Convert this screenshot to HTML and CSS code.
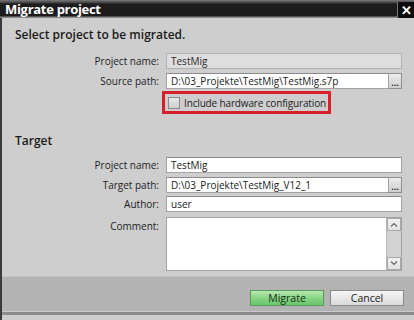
FILE: index.html
```html
<!DOCTYPE html>
<html lang="en">
<head>
  <meta charset="UTF-8">
  <meta name="viewport" content="width=device-width,initial-scale=1">
  <title>Migrate project</title>
  <link rel="stylesheet" href="styles.css">
</head>
<body>
  <div class="dialog">
    <div class="titlebar">
      <span class="title">Migrate project</span>
      <span class="close">&#x2715;</span>
    </div>

    <div class="content">
      <h3>Select project to be migrated.</h3>

      <div class="row">
        <label for="srcName">Project name:</label>
        <input type="text" id="srcName" value="TestMig" disabled>
      </div>
      <div class="row">
        <label for="srcPath">Source path:</label>
        <input type="text" id="srcPath" value="D:\03_Projekte\TestMig\TestMig.s7p">
        <button type="button" class="browse">...</button>
      </div>
      <div class="row check-row">
        <label class="hw-check"><span class="box"></span>Include hardware configuration</label>
      </div>

      <h3 class="target">Target</h3>

      <div class="row">
        <label for="tgtName">Project name:</label>
        <input type="text" id="tgtName" value="TestMig">
      </div>
      <div class="row">
        <label for="tgtPath">Target path:</label>
        <input type="text" id="tgtPath" value="D:\03_Projekte\TestMig_V12_1">
        <button type="button" class="browse">...</button>
      </div>
      <div class="row author">
        <label for="author">Author:</label>
        <input type="text" id="author" value="user">
      </div>
      <div class="row comment">
        <label for="comment">Comment:</label>
        <div class="memo">
          <textarea id="comment"></textarea>
          <div class="scroll">
            <span class="arrow">
              <svg width="8" height="5" viewBox="0 0 8 5"><path d="M1 4.5 L4 1.5 L7 4.5" fill="none" stroke="#666" stroke-width="1.2"/></svg>
            </span>
            <span class="arrow">
              <svg width="8" height="5" viewBox="0 0 8 5"><path d="M1 0.5 L4 3.5 L7 0.5" fill="none" stroke="#666" stroke-width="1.2"/></svg>
            </span>
          </div>
        </div>
      </div>
    </div>

    <div class="footer">
      <button type="button" class="btn migrate">Migrate</button>
      <button type="button" class="btn">Cancel</button>
    </div>
  </div>
</body>
</html>
```

FILE: styles.css
```css
body {
  margin: 0;
  font-family: 'Open Sans', sans-serif;
  color: #222;
  background: #1e1e1e;
}
.dialog {
  width: 414px;
  height: 320px;
  display: flex;
  flex-direction: column;
  background: #cecece;
  border-left: 2px solid #3a3a3a;
  box-sizing: border-box;
}

/* title bar */
.titlebar {
  height: 18px;
  display: flex;
  align-items: center;
  justify-content: space-between;
  background: linear-gradient(#7a7a7a 0, #3c3c3c 3px, #1c1c1c 4px, #1c1c1c 16px, #8a8a8a 17px);
  margin-left: -2px;
}
.title {
  color: #fff;
  font-weight: bold;
  font-size: 13px;
  padding-left: 5px;
  letter-spacing: -0.3px;
}
.close {
  width: 16px;
  height: 16px;
  margin-top: 1px;
  background: #0c0c0c;
  border-left: 1px solid #777;
  color: #fff;
  font-size: 13px;
  font-weight: bold;
  line-height: 16px;
  text-align: center;
}

/* form */
.content {
  padding: 9px 12px 0 13px;
}
h3 {
  margin: 0 0 10px;
  height: 16px;
  font-size: 12px;
  line-height: 16px;
  font-weight: 600;
  color: #1a1a1a;
}
h3.target {
  margin-top: 19px;
  margin-bottom: 8px;
}
.row {
  display: flex;
  align-items: center;
  height: 16px;
  margin-bottom: 4px;
}
.row label {
  width: 144px;
  margin-right: 7px;
  text-align: right;
  font-size: 10px;
}
.row input {
  flex: 1;
  height: 16px;
  box-sizing: border-box;
  border: 1px solid #a4a4a4;
  border-top-color: #8c8c8c;
  background: #fff;
  padding: 0 4px;
  font-family: inherit;
  font-size: 10px;
  color: #222;
  min-width: 0;
}
.row input:disabled {
  background: #dedede;
  border-color: #b2b2b2;
  color: #2a2a2a;
}
.browse {
  width: 13px;
  height: 16px;
  padding: 0;
  border: 1px solid #8e8e8e;
  border-left: none;
  background: linear-gradient(#ececec, #cfcfcf);
  font-size: 9px;
  font-weight: bold;
  line-height: 18px;
  color: #222;
  font-family: inherit;
}

.check-row {
  height: 23px;
  margin-top: -2px;
  margin-bottom: 0;
  padding-left: 147px;
}
.row label.hw-check {
  width: auto;
  margin: 0;
  text-align: left;
  display: flex;
  align-items: center;
  height: 17px;
  padding: 0 2px 0 3px;
  border: 3px solid #d8202c;
  font-size: 10px;
  letter-spacing: -0.15px;
}
.box {
  width: 10px;
  height: 10px;
  border: 1px solid #8a8a8a;
  background: linear-gradient(#e8e8e8, #cfcfcf);
  margin-right: 4px;
}

.author {
  margin-top: -1px;
  margin-bottom: 5px;
}
.comment {
  height: 54px;
  align-items: flex-start;
}
.comment label {
  padding-top: 2px;
}
.memo {
  flex: 1;
  height: 54px;
  display: flex;
  border: 1px solid #a4a4a4;
  box-sizing: border-box;
  background: #fff;
}
.memo textarea {
  flex: 1;
  border: none;
  resize: none;
  padding: 0;
  background: #fff;
}
.scroll {
  width: 14px;
  display: flex;
  flex-direction: column;
  justify-content: space-between;
  background: #d2d2d2;
  border-left: 1px solid #b8b8b8;
}
.arrow {
  height: 13px;
  display: flex;
  align-items: center;
  justify-content: center;
  background: linear-gradient(#f2f2f2, #e2e2e2);
  border: 1px solid #a8a8a8;
  box-sizing: border-box;
}

/* footer */
.footer {
  margin-top: auto;
  height: 34px;
  display: flex;
  justify-content: flex-end;
  align-items: center;
  gap: 6px;
  padding: 0 10px 0 0;
  background: #b3b3b3;
  border-top: 1px solid #c2c2c2;
  border-bottom: 1px solid #cacaca;
  box-shadow: 0 3px 0 #8c8c8c;
  margin-bottom: 8px;
}
.btn {
  width: 74px;
  height: 16px;
  padding: 0;
  border: 1px solid #8a8a8a;
  background: linear-gradient(#f6f6f6, #dadada);
  font-family: inherit;
  font-size: 10.5px;
  color: #222;
  margin-top: 8px;
}
.btn.migrate {
  border-color: #5c9a5c;
  background: linear-gradient(#b8e8b0, #7fd07e 60%, #6cc56e);
  color: #143014;
}
```
